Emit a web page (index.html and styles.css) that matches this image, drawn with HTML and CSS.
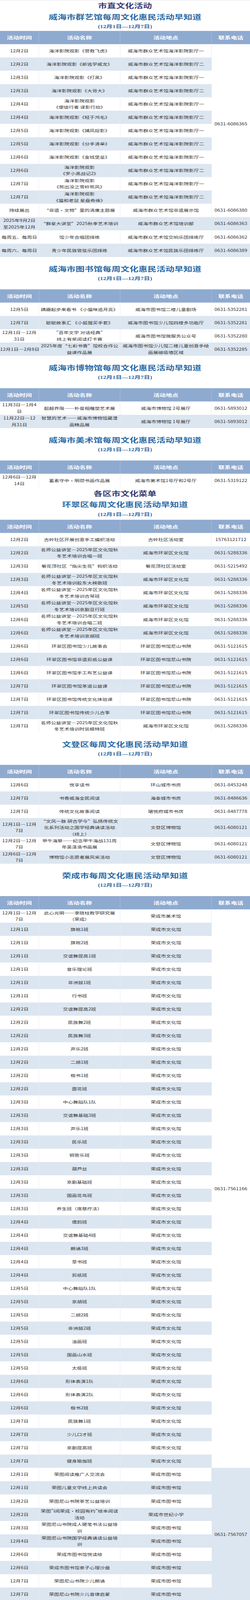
FILE: index.html
```html
<!DOCTYPE html>
<html lang="zh-CN">
<head>
<meta charset="utf-8">
<title>每周文化惠民活动早知道</title>
<link rel="stylesheet" href="styles.css">
</head>
<body>
<div class="page">

<div class="head head-first">
  <div class="t-top">市直文化活动</div>
  <div class="t-sub">威海市群艺馆每周文化惠民活动早知道</div>
  <div class="t-date">(12月1日—12月7日)</div>
</div>
<table class="tbl">
  <colgroup><col class="c1"><col class="c2"><col class="c3"><col class="c4"></colgroup>
  <thead><tr><th>活动时间</th><th>活动名称</th><th>活动地点</th><th>联系电话</th></tr></thead>
  <tbody>
    <tr><td>12月2日</td><td>海洋影院观影《营救飞虎》</td><td>威海市群众艺术馆海洋影院影厅一</td><td class="span-white" rowspan="12">0631-6086365</td></tr>
    <tr><td>12月2日</td><td>海洋影院观影《新逃学威龙》</td><td>威海市群众艺术馆海洋影院影厅二</td></tr>
    <tr><td>12月3日</td><td>海洋影院观影《打黑》</td><td>威海市群众艺术馆海洋影院影厅一</td></tr>
    <tr><td>12月3日</td><td>海洋影院观影《大哥大》</td><td>威海市群众艺术馆海洋影院影厅二</td></tr>
    <tr><td>12月4日</td><td>海洋影院观影<br>《使徒行者 谍影行动》</td><td>威海市群众艺术馆海洋影院影厅一</td></tr>
    <tr><td>12月4日</td><td>海洋影院观影《轻于鸿毛》</td><td>威海市群众艺术馆海洋影院影厅二</td></tr>
    <tr><td>12月5日</td><td>海洋影院观影《捕风捉影》</td><td>威海市群众艺术馆海洋影院影厅一</td></tr>
    <tr><td>12月5日</td><td>海洋影院观影《分手清单》</td><td>威海市群众艺术馆海洋影院影厅二</td></tr>
    <tr><td>12月6日</td><td>海洋影院观影《金钱堡垒》</td><td>威海市群众艺术馆海洋影院影厅一</td></tr>
    <tr><td>12月6日</td><td>海洋影院观影<br>《罗小黑战记2》</td><td>威海市群众艺术馆海洋影院影厅二</td></tr>
    <tr><td>12月7日</td><td>海洋影院观影<br>《熊出没之雪岭熊风》</td><td>威海市群众艺术馆海洋影院影厅一</td></tr>
    <tr><td>12月7日</td><td>海洋影院观影<br>《猫和老鼠 星盘奇缘》</td><td>威海市群众艺术馆海洋影院影厅二</td></tr>
    <tr><td>持续展出</td><td>“非遗·文物”里的清廉主题展</td><td>威海市群众艺术馆非遗展示馆</td><td>0631-6086380</td></tr>
    <tr><td>2025年9月2日<br>至2025年12月</td><td>“群星大讲堂”2025秋季艺术培训</td><td>威海市群众艺术馆培训部</td><td>0631-6086363</td></tr>
    <tr><td>每周五、每周日</td><td>馆少年合唱团排练</td><td>威海市群众艺术馆交响乐团排练厅</td><td>0631-6086362</td></tr>
    <tr><td>每周六、每周日</td><td>青少年民族管弦乐团排练</td><td>威海市群众艺术馆民族乐团排练厅</td><td>0631-6086389</td></tr>
  </tbody>
</table>

<div class="head">
  <div class="t-sub">威海市图书馆每周文化惠民活动早知道</div>
  <div class="t-date">(12月1日—12月7日)</div>
</div>
<table class="tbl">
  <colgroup><col class="c1"><col class="c2"><col class="c3"><col class="c4"></colgroup>
  <thead><tr><th>活动时间</th><th>活动名称</th><th>活动地点</th><th>联系电话</th></tr></thead>
  <tbody>
    <tr><td>12月5日</td><td>蹒跚起步来看书 《小猫咪追月亮》</td><td>威海市图书馆二楼儿童剧场</td><td>0631-5352281</td></tr>
    <tr><td>12月7日</td><td>聪聪故事汇 《小狐狸买手套》</td><td>威海市图书馆少儿馆四楼多功能厅</td><td>0631-5352281</td></tr>
    <tr><td>12月1日—12月<br>31日</td><td>"百年文学 对话经典"<br>线上有奖阅读打卡赛</td><td>威海市图书馆微服务公众号</td><td>0631-5352280</td></tr>
    <tr><td>12月1日—2月8日</td><td>2025年度“七彩书香”馆校合作公<br>益课作品展</td><td>威海市图书馆少儿馆二楼儿童创意手绘<br>画展磁吸墙区域</td><td>0631-5352285</td></tr>
  </tbody>
</table>

<div class="head">
  <div class="t-sub">威海市博物馆每周文化惠民活动早知道</div>
  <div class="t-date">(12月1日—12月7日)</div>
</div>
<table class="tbl">
  <colgroup><col class="c1"><col class="c2"><col class="c3"><col class="c4"></colgroup>
  <thead><tr><th>活动时间</th><th>活动名称</th><th>活动地点</th><th>联系电话</th></tr></thead>
  <tbody>
    <tr><td>11月3日—1月4<br>日</td><td>超越界限——朴俊相雕塑艺术展</td><td>威海市博物馆 2号展厅</td><td>0631-5893012</td></tr>
    <tr><td>11月22日—12<br>月31日</td><td>智慧的艺术——威海市博物馆藏漫<br>画精品展</td><td>威海市博物馆 1号展厅</td><td>0631-5893012</td></tr>
  </tbody>
</table>

<div class="head">
  <div class="t-sub">威海市美术馆每周文化惠民活动早知道</div>
  <div class="t-date">(12月1日—12月7日)</div>
</div>
<table class="tbl">
  <colgroup><col class="c1"><col class="c2"><col class="c3"><col class="c4"></colgroup>
  <thead><tr><th>活动时间</th><th>活动名称</th><th>活动地点</th><th>联系电话</th></tr></thead>
  <tbody>
    <tr><td>12月6日—12月<br>14日</td><td>蓄素守中·明瓒书画作品展</td><td>威海市美术馆1号厅和2号厅</td><td>0631-5319122</td></tr>
  </tbody>
</table>

<div class="head head-district">
  <div class="t-top">各区市文化菜单</div>
  <div class="t-sub">环翠区每周文化惠民活动早知道</div>
  <div class="t-date">(12月1日—12月7日)</div>
</div>
<table class="tbl">
  <colgroup><col class="c1"><col class="c2"><col class="c3"><col class="c4"></colgroup>
  <thead><tr><th>活动时间</th><th>活动名称</th><th>活动地点</th><th>联系电话</th></tr></thead>
  <tbody>
    <tr><td>12月2日</td><td>古岭社区开展创意手工编织活动</td><td>古岭社区活动室</td><td>15763121712</td></tr>
    <tr><td>12月2日</td><td>名师公益讲堂—2025年区文化馆秋<br>冬艺术培训合唱一班</td><td>威海市环翠区文化馆</td><td>0631-5288336</td></tr>
    <tr><td>12月3日</td><td>菊花顶社区“指尖生花”钩织活动</td><td>菊花顶社区活动室</td><td>0631-5215492</td></tr>
    <tr><td>12月3日</td><td>名师公益讲堂—2025年区文化馆秋<br>冬艺术培训胶东大秧歌班</td><td>威海市环翠区文化馆</td><td>0631-5288336</td></tr>
    <tr><td>12月4日</td><td>名师公益讲堂—2025年区文化馆秋<br>冬艺术培训古琴班</td><td>威海市环翠区文化馆</td><td>0631-5288336</td></tr>
    <tr><td>12月5日</td><td>名师公益讲堂—2025年区文化馆秋<br>冬艺术培训京剧旦行班</td><td>威海市环翠区文化馆</td><td>0631-5288336</td></tr>
    <tr><td>12月6日</td><td>名师公益讲堂—2025年区文化馆秋<br>冬艺术培训合唱二班</td><td>威海市环翠区文化馆</td><td>0631-5288336</td></tr>
    <tr><td>12月6日</td><td>名师公益讲堂—2025年区文化馆秋<br>冬艺术培训京胡班</td><td>威海市环翠区文化馆</td><td>0631-5288336</td></tr>
    <tr><td>12月6日</td><td>环翠区图书馆少儿故事会</td><td>环翠区图书馆尼山书院</td><td>0631-5121615</td></tr>
    <tr><td>12月6日</td><td>环翠区图书馆非遗剪纸公益课</td><td>环翠区图书馆尼山书院</td><td>0631-5121615</td></tr>
    <tr><td>12月6日</td><td>环翠区图书馆手工布艺公益课</td><td>环翠区图书馆尼山书院</td><td>0631-5121615</td></tr>
    <tr><td>12月7日</td><td>环翠区图书馆茶道公益课</td><td>环翠区图书馆尼山书院</td><td>0631-5121615</td></tr>
    <tr><td>12月7日</td><td>环翠区图书馆传统文化体验课</td><td>环翠区图书馆尼山书院</td><td>0631-5121615</td></tr>
    <tr><td>12月7日</td><td>环翠区图书馆传统少儿古筝</td><td>环翠区图书馆尼山书院</td><td>0631-5121615</td></tr>
    <tr><td>12月7日</td><td>名师公益讲堂—2025年区文化馆秋<br>冬艺术培训时装模特班</td><td>威海市环翠区文化馆</td><td>0631-5288336</td></tr>
  </tbody>
</table>

<div class="head">
  <div class="t-sub">文登区每周文化惠民活动早知道</div>
  <div class="t-date">(12月1日—12月7日)</div>
</div>
<table class="tbl">
  <colgroup><col class="c1"><col class="c2"><col class="c3"><col class="c4"></colgroup>
  <thead><tr><th>活动时间</th><th>活动名称</th><th>活动地点</th><th>联系电话</th></tr></thead>
  <tbody>
    <tr><td>12月6日</td><td>悦享读书</td><td>环山城市书房</td><td>0631-8453248</td></tr>
    <tr><td>12月7日</td><td>书香威海全民阅读</td><td>海泰城市书房</td><td>0631-8486636</td></tr>
    <tr><td>12月7日</td><td>传统文化故事阅读</td><td>珺悦府城市书房</td><td>0631-8487778</td></tr>
    <tr><td>12月1日—12月<br>7日</td><td>“文风一脉 研古学今”弘扬传统文<br>化系列活动之国学经典诵读活动<br>（线上）</td><td>文登区博物馆</td><td>0631-6080121</td></tr>
    <tr><td>12月2日—12月<br>7日</td><td>甲午海祭——纪念甲午海战131周<br>年吴泽浩书画展</td><td>文登区博物馆</td><td>0631-6080121</td></tr>
    <tr><td>12月6日—12月<br>7日</td><td>博物馆小志愿者展风采活动</td><td>文登区博物馆</td><td>0631-6080121</td></tr>
  </tbody>
</table>

<div class="head">
  <div class="t-sub">荣成市每周文化惠民活动早知道</div>
  <div class="t-date">(12月1日—12月7日)</div>
</div>
<table class="tbl">
  <colgroup><col class="c1"><col class="c2"><col class="c3"><col class="c4"></colgroup>
  <thead><tr><th>活动时间</th><th>活动名称</th><th>活动地点</th><th>联系电话</th></tr></thead>
  <tbody>
    <tr><td>12月1日—12月<br>7日</td><td>此心光明——李晓柱教学研究展<br>（荣成）</td><td>荣成市美术馆</td><td class="span-white" rowspan="42">0631-7561166</td></tr>
    <tr><td>12月1日</td><td>旗袍1班</td><td>荣成市文化馆</td></tr>
    <tr><td>12月1日</td><td>旗袍2班</td><td>荣成市文化馆</td></tr>
    <tr><td>12月1日</td><td>交谊舞提高1班</td><td>荣成市文化馆</td></tr>
    <tr><td>12月1日</td><td>音乐理论班</td><td>荣成市文化馆</td></tr>
    <tr><td>12月1日</td><td>非洲鼓1班</td><td>荣成市文化馆</td></tr>
    <tr><td>12月1日</td><td>行书班</td><td>荣成市文化馆</td></tr>
    <tr><td>12月2日</td><td>交谊舞提高2班</td><td>荣成市文化馆</td></tr>
    <tr><td>12月2日</td><td>民族舞2班</td><td>荣成市文化馆</td></tr>
    <tr><td>12月2日</td><td>民族舞3班</td><td>荣成市文化馆</td></tr>
    <tr><td>12月2日</td><td>声乐2班</td><td>荣成市文化馆</td></tr>
    <tr><td>12月2日</td><td>二胡1班</td><td>荣成市文化馆</td></tr>
    <tr><td>12月2日</td><td>楷书1班</td><td>荣成市文化馆</td></tr>
    <tr><td>12月2日</td><td>面花班</td><td>荣成市文化馆</td></tr>
    <tr><td>12月3日</td><td>中心舞蹈队1队</td><td>荣成市文化馆</td></tr>
    <tr><td>12月3日</td><td>交谊舞基础3班</td><td>荣成市文化馆</td></tr>
    <tr><td>12月3日</td><td>声乐1班</td><td>荣成市文化馆</td></tr>
    <tr><td>12月3日</td><td>民乐班</td><td>荣成市文化馆</td></tr>
    <tr><td>12月3日</td><td>铜管乐班</td><td>荣成市文化馆</td></tr>
    <tr><td>12月3日</td><td>葫芦丝</td><td>荣成市文化馆</td></tr>
    <tr><td>12月3日</td><td>京剧基础班</td><td>荣成市文化馆</td></tr>
    <tr><td>12月3日</td><td>国画花鸟班</td><td>荣成市文化馆</td></tr>
    <tr><td>12月3日</td><td>养生班（席慈疗法）</td><td>荣成市文化馆</td></tr>
    <tr><td>12月4日</td><td>儒韵班</td><td>荣成市文化馆</td></tr>
    <tr><td>12月4日</td><td>交谊舞基础4班</td><td>荣成市文化馆</td></tr>
    <tr><td>12月4日</td><td>朗诵3班</td><td>荣成市文化馆</td></tr>
    <tr><td>12月4日</td><td>草书班</td><td>荣成市文化馆</td></tr>
    <tr><td>12月4日</td><td>剪纸班</td><td>荣成市文化馆</td></tr>
    <tr><td>12月5日</td><td>中心舞蹈队1队</td><td>荣成市文化馆</td></tr>
    <tr><td>12月5日</td><td>京胡班</td><td>荣成市文化馆</td></tr>
    <tr><td>12月5日</td><td>二胡2班</td><td>荣成市文化馆</td></tr>
    <tr><td>12月5日</td><td>非洲鼓2班</td><td>荣成市文化馆</td></tr>
    <tr><td>12月5日</td><td>油画班</td><td>荣成市文化馆</td></tr>
    <tr><td>12月5日</td><td>国画山水班</td><td>荣成市文化馆</td></tr>
    <tr><td>12月5日</td><td>太极班</td><td>荣成市文化馆</td></tr>
    <tr><td>12月6日</td><td>形体表演1队</td><td>荣成市文化馆</td></tr>
    <tr><td>12月6日</td><td>形体表演2队</td><td>荣成市文化馆</td></tr>
    <tr><td>12月6日</td><td>楷书2班</td><td>荣成市文化馆</td></tr>
    <tr><td>12月7日</td><td>民族舞1班</td><td>荣成市文化馆</td></tr>
    <tr><td>12月7日</td><td>少儿口才班</td><td>荣成市文化馆</td></tr>
    <tr><td>12月7日</td><td>京剧提高班</td><td>荣成市文化馆</td></tr>
    <tr><td>12月7日</td><td>健身瑜伽班</td><td>荣成市文化馆</td></tr>
    <tr><td>12月1日</td><td>荣图阅读推广人交流会</td><td>荣成市图书馆</td><td class="span-blue" rowspan="10">0631-7567057</td></tr>
    <tr><td>12月1日</td><td>荣图儿童文学线上共读会</td><td>荣成市图书馆</td></tr>
    <tr><td>12月2日</td><td>荣图尼山书院茶艺公益培训</td><td>荣成市图书馆</td></tr>
    <tr><td>12月2日</td><td>荣图"i阅荣成·校园有约"绘本阅读<br>活动</td><td>荣成市世纪小学</td></tr>
    <tr><td>12月3日</td><td>荣图尼山书院成人硬笔书法公益培<br>训</td><td>荣成市图书馆</td></tr>
    <tr><td>12月4日</td><td>荣图尼山书院国学经典诵读公益培<br>训</td><td>荣成市图书馆</td></tr>
    <tr><td>12月6日</td><td>荣成市图书馆悦读绘</td><td>荣成市图书馆</td></tr>
    <tr><td>12月6日</td><td>荣成市图书馆亲子心理沙盘</td><td>荣成市图书馆</td></tr>
    <tr><td>12月7日</td><td>荣图尼山书院少儿朗诵</td><td>荣成市图书馆</td></tr>
    <tr><td>12月7日</td><td>荣图尼山书院少儿音律启蒙</td><td>荣成市图书馆</td></tr>
  </tbody>
</table>

</div>
</body>
</html>
```

FILE: styles.css
```css
html, body {
  margin: 0;
  padding: 0;
  background: #ffffff;
}

body {
  font-family: "Noto Sans CJK SC", "Noto Sans", sans-serif;
  color: #333333;
}

/* the sheet is one 640x5535 frame; the capture frame is shorter,
   so the whole sheet is fitted into it vertically */
.page {
  box-sizing: border-box;
  width: 640px;
  height: 5535px;
  overflow: hidden;
  border-top: 1px solid #dcdcdc;
  transform: scaleY(0.74);
  transform-origin: 0 0;
}

/* ---------- section headings ---------- */
.head {
  text-align: center;
  font-family: "Liberation Serif", "Noto Sans CJK SC", serif;
  font-weight: 700;
  padding-top: 26px;
  padding-bottom: 25px;
}

.head-first {
  padding-top: 4px;
  padding-bottom: 3px;
}

.head-district {
  padding-top: 7px;
  padding-bottom: 6px;
}

.t-top {
  font-size: 23px;
  line-height: 34px;
  color: #363a72;
}

.t-sub {
  font-size: 23px;
  line-height: 34px;
  color: #2a6ba6;
}

.head-first .t-sub {
  margin-top: 5px;
}

.head-district .t-sub {
  margin-top: 4px;
}

.t-date {
  font-size: 16px;
  line-height: 24px;
  color: #2f6aa3;
  margin-top: 3px;
}

.head-first .t-date {
  margin-top: 2px;
}

.head-district .t-date {
  margin-top: 4px;
}

/* ---------- tables ---------- */
.tbl {
  width: 640px;
  border-collapse: separate;
  border-spacing: 0;
  table-layout: fixed;
}

.c1 { width: 100px; }
.c2 { width: 208px; }
.c3 { width: 234px; }
.c4 { width: 98px; }

.tbl th {
  height: 46px;
  padding: 0;
  background: #8faacf;
  color: #ffffff;
  font-family: "Noto Sans CJK SC", sans-serif;
  font-size: 16px;
  line-height: 24px;
  font-weight: 700;
  text-align: center;
  border-right: 1px solid #a9bedb;
}

.tbl th:last-child {
  border-right: none;
}

.tbl td {
  height: 46px;
  padding: 0;
  font-size: 13px;
  line-height: 22px;
  color: #333333;
  text-align: center;
  vertical-align: middle;
  white-space: nowrap;
  background: #ffffff;
  border-right: 1px solid #e6ebf1;
}

.tbl td:last-child {
  border-right: none;
}

.tbl tbody tr:nth-child(even) td {
  background: #dce6f1;
}

.tbl tbody tr td.span-white {
  background: #ffffff;
}

.tbl tbody tr td.span-blue {
  background: #dce6f1;
}
```
